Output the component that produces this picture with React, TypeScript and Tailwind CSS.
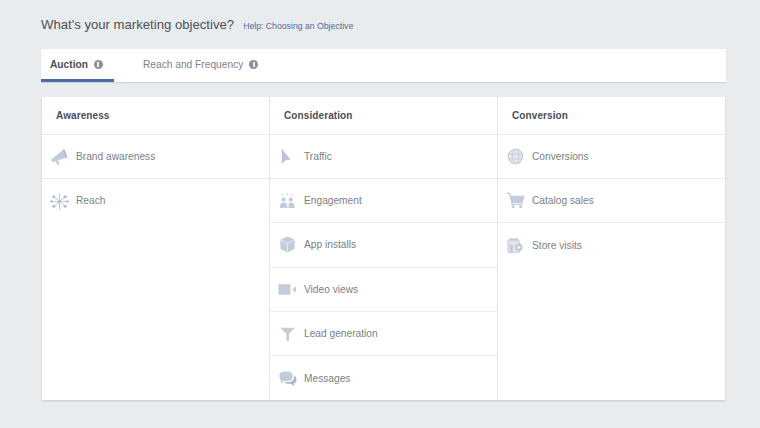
import React from "react";

const C = "#c3ccda";
const I = ({ children }: { children: React.ReactNode }) => (
  <svg width="19" height="19" viewBox="0 0 20 20" className="shrink-0 block">{children}</svg>
);

const icons: Record<string, React.ReactNode> = {
  brand: <I><path d="M1 13.5 L14 3 L17 11 L3 16 Z" fill={C} /><path d="M15 2 L18.5 11 L17 11.8 L13.6 2.8Z" fill="#aab4c6" /><path d="M6 15 L8 19 L10 18.4 L8.6 14Z" fill={C} /></I>,
  reach: <I><g stroke="#b4bfd0" strokeWidth="1"><path d="M10 1.5V18.5M10 10 L4 5M10 10 L16 5M10 10 L4 15M10 10 L16 15" /></g><circle cx="10" cy="10" r="1.8" fill="#b4bfd0" /><circle cx="4" cy="5" r="1.7" fill="#b4bfd0" /><circle cx="16" cy="5" r="1.7" fill="#b4bfd0" /><circle cx="4" cy="15" r="1.7" fill="#b4bfd0" /><circle cx="16" cy="15" r="1.7" fill="#b4bfd0" /><circle cx="1.6" cy="10" r="1.4" fill="#b4bfd0" /><circle cx="18.4" cy="10" r="1.4" fill="#b4bfd0" /><path d="M10 10H2M10 10H18" stroke="#b4bfd0" strokeWidth="0.8" /></I>,
  traffic: <I><path d="M4 1.5 L4 18 L8 14 L13 13.5 Z" fill="#bcc5d3" /></I>,
  engagement: <I><circle cx="6" cy="9" r="2.2" fill={C} /><circle cx="13.5" cy="9" r="2.2" fill={C} /><path d="M2 18 C2 13 3.5 12 6 12 C8.5 12 10 13 10 18Z" fill={C} /><path d="M11 18 C11 13 11.5 12 13.5 12 C16 12 17.5 13 17.5 18Z" fill={C} /><path d="M5 3v2M10 2v2M14.5 3v2" stroke={C} strokeWidth="1" /></I>,
  app: <I><path d="M10 1.5 L17.5 5 V14.5 L10 18.5 L2.5 14.5 V5 Z" fill={C} /><path d="M2.5 5 L10 9 L17.5 5 M10 9 V18.5" stroke="#eef1f5" strokeWidth="0.9" fill="none" /></I>,
  video: <I><rect x="0.5" y="4.5" width="12.5" height="11" fill={C} /><path d="M19 6.5 L15 10 L19 13.5 Z" fill={C} /></I>,
  lead: <I><path d="M2.5 4 H17.5 L11.5 10.5 V18 H8.8 V10.5 Z" fill={C} /></I>,
  messages: <I><path d="M1.5 7 C1.5 4 3.5 2.5 7 2.5 H10 C14 2.5 15.5 4.5 15.5 7.5 C15.5 11 13.5 12.5 10 12.5 H6 L3 15 V12 C2 11 1.5 9 1.5 7Z" fill={C} /><path d="M16.5 6.5 C18.5 7.5 19.5 9 19.5 11 C19.5 13 18.5 14.5 17 15 V18 L13.5 15.5 H10 C8.5 15.5 7.5 14.8 7 13.8 H10.5 C14.5 13.8 17 12 17 8Z" fill="#aeb8c9" /></I>,
  conversions: <I><circle cx="10" cy="10" r="7.6" fill="#e4e8ee" stroke={C} strokeWidth="1.2" /><ellipse cx="10" cy="10" rx="3.4" ry="7.6" fill="none" stroke={C} /><path d="M2.6 7.5 H17.4 M2.6 12.5 H17.4" stroke={C} /></I>,
  catalog: <I><path d="M0.5 2.5 H4 L6.5 14 H17" fill="none" stroke={C} strokeWidth="1.3" /><path d="M4.5 5 H19.5 L17.5 12.5 H6 Z" fill={C} /><rect x="6" y="15" width="3" height="3" fill={C} /><rect x="14" y="15" width="3" height="3" fill={C} /></I>,
  store: <I><rect x="3" y="2.5" width="10" height="2" fill={C} /><path d="M2 5 H14 V17.5 H2 Z" fill="#e4e8ee" stroke={C} /><rect x="4" y="9" width="3.2" height="8" fill={C} /><circle cx="13.5" cy="12" r="4" fill={C} /><circle cx="13.5" cy="12" r="1.5" fill="#f2f4f7" /></I>,
};

const Info = () => (
  <span className="w-[9px] h-[9px] rounded-full bg-[#8b929c] inline-flex items-center justify-center">
    <span className="w-[2px] h-[5px] bg-[#e8eaed]" />
  </span>
);

const Row = ({ icon, label }: { icon: string; label: string }) => (
  <div className="h-[44.4px] flex items-center border-b border-[#e9ebee] last:border-b-0 pl-[8px]">
    <span className="w-[19px] flex justify-center">{icons[icon]}</span>
    <span className="ml-[7px] text-[10.2px] text-[#7b7f86]">{label}</span>
  </div>
);

const Col = ({ title, rows, last }: { title: string; rows: [string, string][]; last?: boolean }) => (
  <div className={`flex-1 ${last ? "" : "border-r border-[#e3e5e9]"}`}>
    <div className="h-[37.5px] flex items-center pl-[14px] pt-[1px] border-b border-[#e9ebee] text-[10px] tracking-[0.1px] font-bold text-[#4b4f56]">{title}</div>
    {rows.map(([i, l]) => <Row key={l} icon={i} label={l} />)}
  </div>
);

export default function App() {
  return (
    <div className="w-[760px] h-[428px] bg-[#e9ecef] pt-[15px] pl-[41px] pr-[34px] overflow-hidden" style={{ fontFamily: '"Liberation Sans", Arial, sans-serif' }}>
      <div className="h-[20px] flex items-center">
        <span className="text-[13.15px] text-[#4b4f56]">What's your marketing objective?</span>
        <span className="ml-[9px] mt-[3px] text-[8.7px] text-[#4f6a95]">Help: Choosing an Objective</span>
      </div>
      <div className="mt-[14px] h-[33px] bg-white shadow-[0_1px_1px_rgba(0,0,0,0.1)] flex">
        <div className="w-[73px] h-full border-b-[3px] border-[#4a6da7] flex items-center pt-[1px] pl-[9px] gap-[6px] text-[10.2px] font-bold text-[#4b4f56]">
          Auction <Info />
        </div>
        <div className="ml-[29px] pb-[2px] flex items-center gap-[6px] text-[10.2px] text-[#7d838c]">
          Reach and Frequency <Info />
        </div>
      </div>
      <div className="mt-[15px] w-[683px] ml-[1px] h-[303px] bg-white shadow-[0_1px_2px_rgba(0,0,0,0.15)] flex">
        <Col title="Awareness" rows={[["brand", "Brand awareness"], ["reach", "Reach"]]} />
        <Col title="Consideration" rows={[["traffic", "Traffic"], ["engagement", "Engagement"], ["app", "App installs"], ["video", "Video views"], ["lead", "Lead generation"], ["messages", "Messages"]]} />
        <Col last title="Conversion" rows={[["conversions", "Conversions"], ["catalog", "Catalog sales"], ["store", "Store visits"]]} />
      </div>
    </div>
  );
}
